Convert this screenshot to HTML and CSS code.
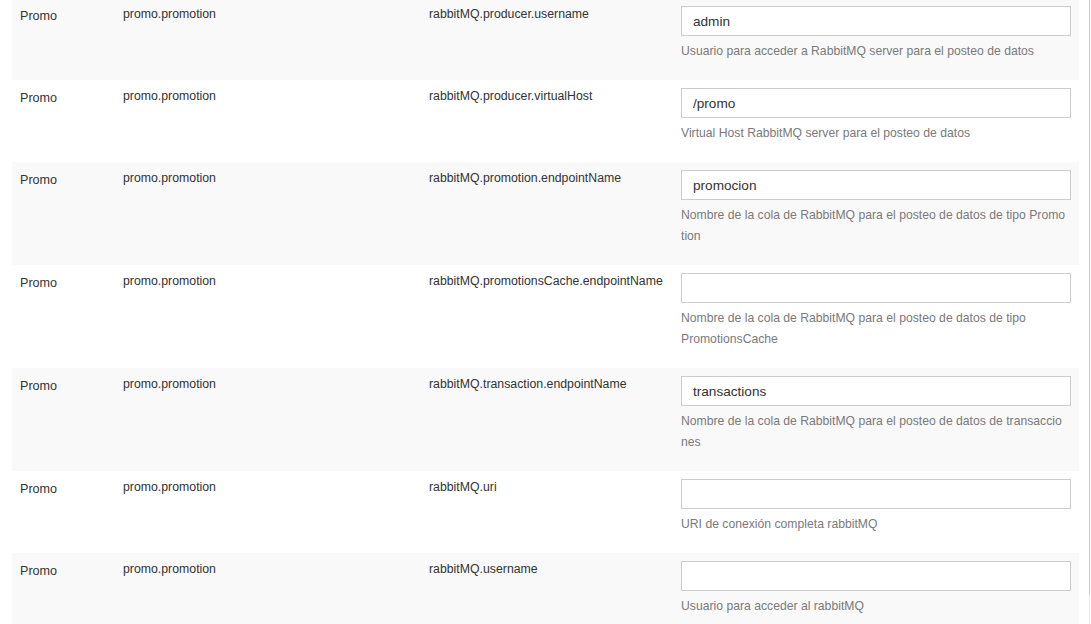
FILE: index.html
```html
<!DOCTYPE html>
<html lang="es">

<head>
    <meta charset="UTF-8">
    <meta name="viewport" content="width=device-width, initial-scale=1.0">
    <title>Configuración</title>
    <link rel="stylesheet" href="styles.css">
</head>

<body>
    <div class="page">
        <!-- tabla de parámetros -->
        <div class="table-wrap">
            <table class="config-table">
                <colgroup>
                    <col class="col-module">
                    <col class="col-group">
                    <col class="col-key">
                    <col class="col-value">
                </colgroup>
                <tbody>
                    <tr>
                        <td class="module">Promo</td>
                        <td>promo.promotion</td>
                        <td>rabbitMQ.producer.username</td>
                        <td class="value">
                            <input class="value-input" type="text" value="admin">
                            <div class="help">Usuario para acceder a RabbitMQ server para el posteo de datos</div>
                        </td>
                    </tr>
                    <tr>
                        <td class="module">Promo</td>
                        <td>promo.promotion</td>
                        <td>rabbitMQ.producer.virtualHost</td>
                        <td class="value">
                            <input class="value-input" type="text" value="/promo">
                            <div class="help">Virtual Host RabbitMQ server para el posteo de datos</div>
                        </td>
                    </tr>
                    <tr>
                        <td class="module">Promo</td>
                        <td>promo.promotion</td>
                        <td>rabbitMQ.promotion.endpointName</td>
                        <td class="value">
                            <input class="value-input" type="text" value="promocion">
                            <div class="help">Nombre de la cola de RabbitMQ para el posteo de datos de tipo Promo<br>tion</div>
                        </td>
                    </tr>
                    <tr>
                        <td class="module">Promo</td>
                        <td>promo.promotion</td>
                        <td>rabbitMQ.promotionsCache.endpointName</td>
                        <td class="value">
                            <input class="value-input" type="text" value="">
                            <div class="help">Nombre de la cola de RabbitMQ para el posteo de datos de tipo<br>PromotionsCache</div>
                        </td>
                    </tr>
                    <tr>
                        <td class="module">Promo</td>
                        <td>promo.promotion</td>
                        <td>rabbitMQ.transaction.endpointName</td>
                        <td class="value">
                            <input class="value-input" type="text" value="transactions">
                            <div class="help">Nombre de la cola de RabbitMQ para el posteo de datos de transaccio<br>nes</div>
                        </td>
                    </tr>
                    <tr>
                        <td class="module">Promo</td>
                        <td>promo.promotion</td>
                        <td>rabbitMQ.uri</td>
                        <td class="value">
                            <input class="value-input" type="text" value="">
                            <div class="help">URI de conexión completa rabbitMQ</div>
                        </td>
                    </tr>
                    <tr>
                        <td class="module">Promo</td>
                        <td>promo.promotion</td>
                        <td>rabbitMQ.username</td>
                        <td class="value">
                            <input class="value-input" type="text" value="">
                            <div class="help">Usuario para acceder al rabbitMQ</div>
                        </td>
                    </tr>
                </tbody>
            </table>
        </div>

        <!-- borde de la barra de desplazamiento -->
        <div class="scroll-rail"></div>
    </div>
</body>

</html>
```

FILE: styles.css
```css
/* página */
body {
    margin: 0;
    background-color: #fff;
    font-family: "Liberation Sans", Arial, sans-serif;
    color: #333;
    overflow: hidden;
}

.page {
    display: flex;
    height: 624px;
}

.table-wrap {
    width: 1067px;
    padding-left: 12px;
}

/* barra lateral derecha */
.scroll-rail {
    width: 1px;
    margin-left: auto;
    margin-right: 1px;
    background: linear-gradient(#c9c9c9 0, #c9c9c9 594px, #e6e6e6 594px);
}

/* tabla */
.config-table {
    width: 1067px;
    margin-top: -2px;
    border-collapse: collapse;
    table-layout: fixed;
}

.col-module { width: 103px; }
.col-group { width: 306px; }
.col-key { width: 252px; }
.col-value { width: 406px; }

.config-table tr:nth-child(odd) {
    background-color: #f9f9f9;
}

.config-table td {
    padding: 7px 8px 8px;
    vertical-align: top;
    font-size: 12.3px;
    line-height: 18px;
    color: #333;
    white-space: nowrap;
}

.config-table td.module {
    padding-top: 9px;
    font-size: 12.6px;
}

.config-table td.value {
    padding-top: 8px;
}

/* campo de valor */
.value-input {
    display: block;
    box-sizing: border-box;
    width: 100%;
    height: 30px;
    margin: 0;
    padding: 0 11px;
    border: 1px solid #cccccc;
    background-color: #fff;
    font-family: "Liberation Sans", Arial, sans-serif;
    font-size: 13.6px;
    color: #333;
    outline: none;
}

.help {
    margin: 5px 0 10px;
    font-size: 12.2px;
    line-height: 21px;
    color: #7a7a7a;
}
```
